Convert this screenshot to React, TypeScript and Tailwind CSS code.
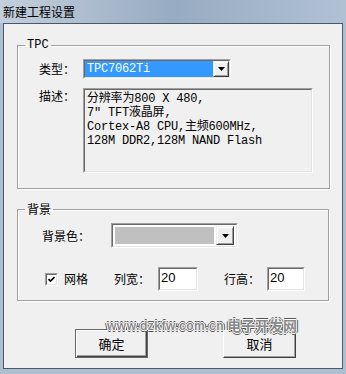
const sans = "font-['Noto_Sans_CJK_SC',sans-serif]";
const mono = "font-['Liberation_Mono','Noto_Sans_CJK_SC',monospace]";

const Arrow = () => (
  <svg width="7" height="4" viewBox="0 0 7 4">
    <polygon points="0,0 7,0 3.5,4" fill="#000" />
  </svg>
);

const DropButton = ({ className }: { className: string }) => (
  <div
    className={`flex items-center justify-center bg-[#f0f0f0] border border-t-[#f0f0f0] border-l-[#f0f0f0] border-r-[#404040] border-b-[#404040] shadow-[inset_1px_1px_0_#fff,inset_-1px_-1px_0_#a0a0a0] ${className}`}
  >
    <Arrow />
  </div>
);

const Sunken = ({ className, children }: { className: string; children?: React.ReactNode }) => (
  <div
    className={`border border-t-[#a0a0a0] border-l-[#a0a0a0] border-r-white border-b-white ${className}`}
  >
    <div className="w-full h-full border border-t-[#696969] border-l-[#696969] border-r-[#e3e3e3] border-b-[#e3e3e3]">
      {children}
    </div>
  </div>
);

const Label = ({ text, className = "" }: { text: string; className?: string }) => (
  <span className={`${sans} text-[12px] leading-[14px] text-black ${className}`}>{text}</span>
);

const App = () => {
  return (
    <div className="relative w-[346px] h-[374px] bg-[#aebfd2] flex flex-col overflow-hidden">
      <div className="h-[23px] px-[3px] flex items-center bg-gradient-to-r from-[#c3cfdc] via-[#97abc2] to-[#b0c1d4]">
        <span className={`${sans} text-[12px] leading-[14px] text-black`}>新建工程设置</span>
      </div>

      <div className="mx-[3px] w-[340px] h-[346px] bg-[#f0f0f0] border border-[#4a5868] px-[13px] pt-[14px] flex flex-col">
        <fieldset className="w-[312px] border border-[#a0a0a0] shadow-[1px_1px_0_#fff,inset_1px_1px_0_#fff]">
          <legend className={`${mono} ml-[7px] px-[2px] text-[12px] leading-[14px] text-black`}>TPC</legend>
          <div className="pl-[21px] pr-[16px] pt-[7px] pb-[15px] flex flex-col">
            <div className="flex items-center">
              <Label text="类型：" className="w-[44px]" />
              <Sunken className="w-[148px] h-[20px]">
                <div className="flex h-full bg-white">
                  <div className={`${mono} flex-1 bg-[#3399ff] text-white text-[12px] leading-[16px] pl-[2px] tracking-[-0.2px]`}>
                    TPC7062Ti
                  </div>
                  <DropButton className="w-[16px] h-full" />
                </div>
              </Sunken>
            </div>
            <div className="mt-[9px] flex items-start">
              <Label text="描述：" className="w-[44px] pt-[1px]" />
              <Sunken className="w-[230px] h-[85px]">
                <div className={`${mono} h-full bg-[#f0f0f0] pl-[2px] pt-[2px] text-[12px] leading-[14px] tracking-[-0.2px] text-black whitespace-pre`}>
                  <div>分辨率为800 X 480,</div>
                  <div>7″ TFT液晶屏,</div>
                  <div>Cortex-A8 CPU,主频600MHz,</div>
                  <div>128M DDR2,128M NAND Flash</div>
                </div>
              </Sunken>
            </div>
          </div>
        </fieldset>

        <fieldset className="mt-[13px] w-[312px] border border-[#a0a0a0] shadow-[1px_1px_0_#fff,inset_1px_1px_0_#fff]">
          <legend className={`${sans} ml-[7px] px-[2px] text-[12px] leading-[14px] text-black`}>背景</legend>
          <div className="pl-[24px] pt-[7px] pb-[9px] flex flex-col">
            <div className="flex items-center">
              <Label text="背景色：" className="w-[69px] pt-[1px]" />
              <Sunken className="w-[127px] h-[25px]">
                <div className="flex h-full bg-white p-[2px] gap-[2px]">
                  <div className="flex-1 bg-[#c0c0c0]" />
                  <DropButton className="w-[18px] h-[19px] -mt-[1px]" />
                </div>
              </Sunken>
            </div>
            <div className="mt-[19px] h-[24px] flex items-center">
              <Sunken className="ml-[3px] w-[13px] h-[13px]">
                <div className="w-full h-full bg-white flex items-center justify-center">
                  <svg width="7" height="7" viewBox="0 0 7 7">
                    <path d="M0.5 3 L2.5 5 L6.5 1" stroke="#000" strokeWidth="1.6" fill="none" />
                  </svg>
                </div>
              </Sunken>
              <Label text="网格" className="ml-[6px]" />
              <Label text="列宽：" className="ml-[26px]" />
              <Sunken className="ml-[8px] w-[40px] h-[24px]">
                <div className="h-full bg-white pl-[1px] font-['Liberation_Sans',sans-serif] text-[13px] leading-[18px] text-black">20</div>
              </Sunken>
              <Label text="行高：" className="ml-[26px]" />
              <Sunken className="ml-[7px] w-[38px] h-[24px]">
                <div className="h-full bg-white pl-[1px] font-['Liberation_Sans',sans-serif] text-[13px] leading-[18px] text-black">20</div>
              </Sunken>
            </div>
          </div>
        </fieldset>

        <div className="mt-[28px] flex">
          <button className={`${sans} ml-[58px] w-[73px] h-[29px] bg-[#f0f0f0] border border-[#696969] shadow-[inset_1px_1px_0_#fff,inset_-1px_-1px_0_#404040,inset_-2px_-2px_0_#a0a0a0] text-[13px] leading-[14px] text-black`}>
            确定
          </button>
          <button className={`${sans} ml-[75px] w-[73px] h-[29px] bg-[#f0f0f0] border border-t-white border-l-white border-r-[#404040] border-b-[#404040] shadow-[inset_-1px_-1px_0_#a0a0a0] text-[13px] leading-[14px] text-black`}>
            取消
          </button>
        </div>
      </div>

      <div className="absolute left-[107px] top-[317px] flex items-end gap-[3px] font-bold text-[#8a8a8a] [text-shadow:1px_0_0_#fff,-1px_0_0_#fff,0_1px_0_#fff,0_-1px_0_#fff,2px_0_0_#555,-2px_0_0_#555,0_2px_0_#555,0_-2px_0_#555]">
        <span className="font-['Liberation_Sans',sans-serif] text-[12px] leading-[14px] tracking-[0.5px]">www.dzkfw.com.cn</span>
        <span className={`${sans} text-[14px] leading-[16px]`}>电子开发网</span>
      </div>
    </div>
  );
};

export default App;
